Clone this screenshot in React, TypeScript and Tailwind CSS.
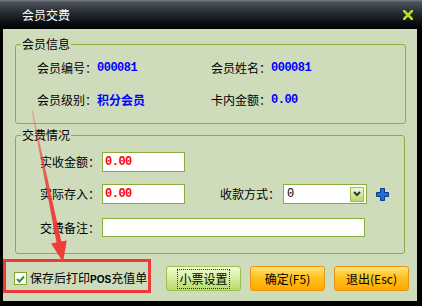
import React from "react";

function Label({ children }: { children: React.ReactNode }) {
  return <span className="w-[60px] shrink-0 whitespace-nowrap">{children}</span>;
}

export default function App() {
  return (
    <div className="relative w-[422px] h-[306px] bg-black flex flex-col font-['Noto_Sans_CJK_SC','Liberation_Sans',sans-serif] text-[12px] leading-[14px] text-black overflow-hidden">
      {/* Title bar */}
      <div className="h-[29px] shrink-0 flex items-center justify-between pl-[22px] pr-[9px] pt-[1px] bg-[linear-gradient(180deg,#7c828a_0px,#4e545b_2px,#2a2f34_12px,#0d1013_22px,#000_29px)]">
        <span className="text-white text-[12px] leading-[14px] tracking-[0px]">会员交费</span>
        <svg width="10" height="10" viewBox="0 0 10 10">
          <path d="M1 1 L9 9 M9 1 L1 9" stroke="#b6de2a" strokeWidth="2.6" strokeLinecap="square" />
        </svg>
      </div>

      {/* Body */}
      <div className="flex-1 ml-[3px] mr-[5px] mb-[5px] bg-[#cfdcbc] flex flex-col">
        {/* Group 1 */}
        <fieldset className="mt-[8px] ml-[12px] mr-[11px] h-[87px] border border-[#8aae3e] rounded-[3px]">
          <legend className="ml-[5px] px-[1px] leading-[14px]">会员信息</legend>
          <div className="flex flex-col pt-[7px] pl-[21px]">
            <div className="flex items-center h-[20px]">
              <div className="w-[174px] flex items-center">
                <Label>会员编号：</Label>
                <span className="font-['Liberation_Mono',monospace] font-bold text-[12px] tracking-[-0.5px] text-[#0000ff]">000081</span>
              </div>
              <div className="flex items-center">
                <Label>会员姓名：</Label>
                <span className="font-['Liberation_Mono',monospace] font-bold text-[12px] tracking-[-0.5px] text-[#0000ff]">000081</span>
              </div>
            </div>
            <div className="flex items-center h-[20px] mt-[12px]">
              <div className="w-[174px] flex items-center">
                <Label>会员级别：</Label>
                <span className="font-bold text-[#0000ff]">积分会员</span>
              </div>
              <div className="flex items-center">
                <Label>卡内金额：</Label>
                <span className="font-['Liberation_Mono',monospace] font-bold text-[12px] tracking-[-0.5px] text-[#0000ff]">0.00</span>
              </div>
            </div>
          </div>
        </fieldset>

        {/* Group 2 */}
        <fieldset className="mt-[4px] ml-[12px] mr-[12px] h-[126px] border border-[#8aae3e] rounded-[3px]">
          <legend className="ml-[5px] px-[1px] leading-[14px]">交费情况</legend>
          <div className="flex flex-col pt-[10px] pl-[24px]">
            <div className="flex items-center h-[20px]">
              <Label>实收金额：</Label>
              <div className="ml-[2px] w-[83px] h-[20px] bg-white border border-[#8aae3e] flex items-center pl-[2px] font-['Liberation_Mono',monospace] font-bold text-[12px] tracking-[-0.5px] text-[#ff0000]">
                0.00
              </div>
            </div>
            <div className="flex items-center h-[20px] mt-[12px]">
              <Label>实际存入：</Label>
              <div className="ml-[2px] w-[83px] h-[20px] bg-white border border-[#8aae3e] flex items-center pl-[2px] font-['Liberation_Mono',monospace] font-bold text-[12px] tracking-[-0.5px] text-[#ff0000]">
                0.00
              </div>
              <div className="ml-[35px] flex items-center">
                <Label>收款方式：</Label>
                <div className="ml-[3px] w-[84px] h-[20px] bg-white border border-[#8aae3e] flex items-center justify-between pl-[3px] pr-[2px]">
                  <span className="font-['Liberation_Mono',monospace] text-[12px]">0</span>
                  <div className="w-[14px] h-[15px] border border-[#9cc052] bg-[linear-gradient(180deg,#f2fadc,#b4da62)] flex items-center justify-center">
                    <svg width="8" height="6" viewBox="0 0 8 6">
                      <path d="M1 1 L4 4 L7 1" stroke="#333" strokeWidth="2" fill="none" />
                    </svg>
                  </div>
                </div>
                <svg className="ml-[9px]" width="13" height="13" viewBox="0 0 13 13">
                  <path
                    d="M4.5 0.5 H8.5 V4.5 H12.5 V8.5 H8.5 V12.5 H4.5 V8.5 H0.5 V4.5 H4.5 Z"
                    fill="#1f6fd6"
                    stroke="#0b3a8c"
                    strokeWidth="1"
                  />
                </svg>
              </div>
            </div>
            <div className="flex items-center h-[19px] mt-[14px]">
              <Label>交费备注：</Label>
              <div className="ml-[2px] w-[263px] h-[19px] bg-white border border-[#8aae3e]" />
            </div>
          </div>
        </fieldset>

        {/* Bottom row */}
        <div className="flex items-center mt-[12px] pl-[11px] pr-[8px]">
          <div className="w-[13px] h-[13px] bg-white border border-[#7ea634] flex items-center justify-center">
            <svg width="9" height="8" viewBox="0 0 9 8">
              <path d="M1 4 L3.5 6.5 L8 1.5" stroke="#2a9a2a" strokeWidth="2" fill="none" />
            </svg>
          </div>
          <span className="ml-[3px] whitespace-nowrap">
            保存后打印<span className="font-['Liberation_Sans',sans-serif] text-[10px] font-bold">POS</span>充值单
          </span>
          <div className="ml-auto flex items-center gap-[9px]">
            <button className="w-[75px] h-[25px] rounded-[3px] border border-[#9cc04e] bg-[linear-gradient(180deg,#f2fad6,#d6eca0_50%,#b6da6a)] flex items-center justify-center">
              <span className="border border-dotted border-[#2222bb] px-[1px] leading-[18px]">小票设置</span>
            </button>
            <button className="w-[75px] h-[25px] rounded-[3px] border border-[#e89512] bg-[linear-gradient(180deg,#ffe27a,#ffc21e_45%,#ffa800)] flex items-center justify-center">
              确定(F5)
            </button>
            <button className="w-[75px] h-[25px] rounded-[3px] border border-[#e89512] bg-[linear-gradient(180deg,#ffe27a,#ffc21e_45%,#ffa800)] flex items-center justify-center">
              退出(Esc)
            </button>
          </div>
        </div>
      </div>

      {/* Annotation overlay: red box */}
      <div className="absolute left-[3px] top-[259px] w-[148px] h-[34px] border-[3px] border-[#f03a3a] pointer-events-none" />
      {/* Annotation overlay: red arrow */}
      <svg className="absolute left-0 top-0 pointer-events-none" width="422" height="306" viewBox="0 0 422 306">
        <defs>
          <linearGradient id="arr" x1="0" y1="110" x2="0" y2="262" gradientUnits="userSpaceOnUse">
            <stop offset="0" stopColor="#f04040" stopOpacity="0.35" />
            <stop offset="0.5" stopColor="#f03c3c" stopOpacity="0.9" />
            <stop offset="1" stopColor="#f03838" stopOpacity="1" />
          </linearGradient>
        </defs>
        <polygon
          points="32.5,109.9 61.3,241.5 66.8,240.4 63,262 51.1,243.6 56.5,242.5 31.5,110.1"
          fill="url(#arr)"
        />
      </svg>
    </div>
  );
}
